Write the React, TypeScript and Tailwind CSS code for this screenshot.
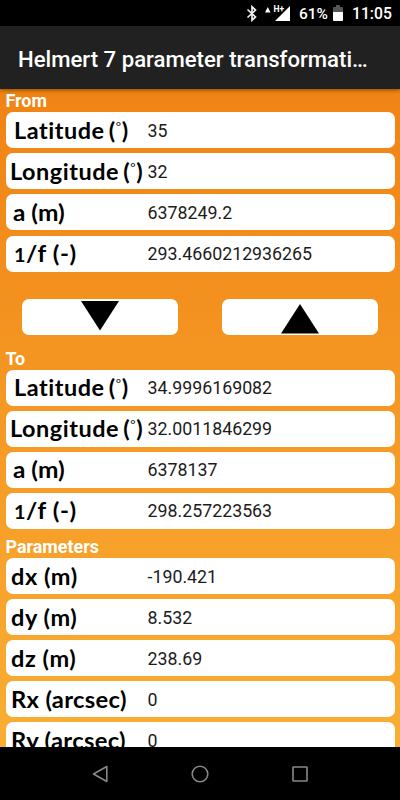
import type { ReactNode } from 'react';

type Field = {
    label: ReactNode;
    value: string;
    labelClass: string;
};

const latitude = (
    <>
        <span>Latitude</span>
        <span className="ml-[4px]">(</span>
        <sup className="-top-[8px] text-[12px] font-normal">°</sup>
        <span>)</span>
    </>
);

const longitude = (
    <>
        <span>Longitude</span>
        <span className="ml-[4px]">(</span>
        <sup className="-top-[8px] text-[12px] font-normal">°</sup>
        <span>)</span>
    </>
);

const flattening = (
    <>
        <span className="text-[18px]">1</span>/f (-)
    </>
);

const fromFields: Field[] = [
    { label: latitude, value: '35', labelClass: 'ml-[8.5px] scale-x-[1.065] tracking-[0.5px]' },
    { label: longitude, value: '32', labelClass: 'ml-[4px] scale-x-[1.065] tracking-[0.5px]' },
    { label: 'a (m)', value: '6378249.2', labelClass: 'ml-[7px] scale-x-[1.11]' },
    { label: flattening, value: '293.4660212936265', labelClass: 'ml-[8px] scale-x-[1.1] tracking-[0.5px]' },
];

const toFields: Field[] = [
    { label: latitude, value: '34.9996169082', labelClass: 'ml-[8.5px] scale-x-[1.065] tracking-[0.5px]' },
    { label: longitude, value: '32.0011846299', labelClass: 'ml-[4px] scale-x-[1.065] tracking-[0.5px]' },
    { label: 'a (m)', value: '6378137', labelClass: 'ml-[7px] scale-x-[1.11]' },
    { label: flattening, value: '298.257223563', labelClass: 'ml-[8px] scale-x-[1.1] tracking-[0.5px]' },
];

const paramFields: Field[] = [
    { label: 'dx (m)', value: '-190.421', labelClass: 'ml-[5px] scale-x-[1.07] tracking-[0.5px]' },
    { label: 'dy (m)', value: '8.532', labelClass: 'ml-[5px] scale-x-[1.07] tracking-[0.5px]' },
    { label: 'dz (m)', value: '238.69', labelClass: 'ml-[5px] scale-x-[1.07] tracking-[0.5px]' },
    { label: 'Rx (arcsec)', value: '0', labelClass: 'ml-[5px] scale-x-[1.08] tracking-[0.3px]' },
    { label: 'Ry (arcsec)', value: '0', labelClass: 'ml-[5px] scale-x-[1.08] tracking-[0.3px]' },
];

const FieldRow = ({ label, value, labelClass }: Field) => (
    <div className="flex h-9 shrink-0 items-center rounded-[7px] bg-white pt-px text-black">
        <div className="w-[142px] shrink-0">
            <span className={`block w-fit origin-left whitespace-nowrap font-['Lato',sans-serif] text-[22px] leading-9 font-bold ${labelClass}`}>
                {label}
            </span>
        </div>
        <span className="text-[17.8px] leading-9 text-[#1c1c1c]">{value}</span>
    </div>
);

const FieldGroup = ({ title, fields }: { title: string; fields: Field[] }) => (
    <section>
        <h2 className="h-[22px] text-[17.9px] leading-[22px] font-bold text-white">{title}</h2>
        <div className="flex flex-col gap-[5.1px]">
            {fields.map((field, idx) => (
                <FieldRow key={idx} {...field} />
            ))}
        </div>
    </section>
);

const StatusBar = () => (
    <div className="flex h-[26px] shrink-0 items-center bg-black pr-[9px] pt-[1px] text-white">
        <svg className="ml-auto h-[17px] w-[12px]" viewBox="0 0 12 17" fill="none" stroke="#f0f0f0" strokeWidth="1.7">
            <path d="M1.5 4.5 9.5 12 6 15.2V1.8L9.5 5 1.5 12.5" />
        </svg>
        <svg className="ml-[7px] h-[17px] w-[26px]" viewBox="0 0 26 17" fill="white">
            <path d="M0 7.5 2.800 2l2.700 5.500z" />
            <path d="M25 1v15H10z" />
            <text x="8.500" y="7.200" fontSize="8.500" fontWeight="700" fontFamily="Roboto, sans-serif" stroke="black" strokeWidth="1.600" paintOrder="stroke">
                H+
            </text>
        </svg>
        <span className="ml-[8px] w-[29px] pt-px text-[15.5px] leading-5 font-medium">61%</span>
        <svg className="ml-[5px] h-[17px] w-[10px]" viewBox="0 0 10 17">
            <path fill="#555" d="M3 0h4v2h2.200q.8 0 .8.8V7H0V2.800Q0 2 .8 2H3z" />
            <path fill="white" d="M0 7h10v8.200q0 .8-.8.8H.8q-.8 0-.8-.8z" />
        </svg>
        <span className="ml-[9px] w-[39px] pt-px text-[15.7px] leading-5 font-medium">11:05</span>
    </div>
);

const NavBar = () => (
    <div className="flex h-[53px] shrink-0 items-center justify-center gap-[82px] bg-black">
        <svg className="size-[18px]" viewBox="0 0 18 18" fill="none" stroke="#888" strokeWidth="1.6" strokeLinejoin="round">
            <path d="M15.8 1.5v15L2.5 9z" />
        </svg>
        <svg className="size-[18px]" viewBox="0 0 18 18" fill="none" stroke="#888" strokeWidth="1.6">
            <circle cx="9" cy="9" r="7.8" />
        </svg>
        <svg className="size-[18px]" viewBox="0 0 18 18" fill="none" stroke="#888" strokeWidth="1.6">
            <rect x="2" y="2" width="14" height="14" rx=".5" />
        </svg>
    </div>
);

const App = () => {
    return (
        <div className="flex h-[800px] w-[400px] flex-col overflow-hidden bg-black font-['Roboto',sans-serif]">
            <StatusBar />
            <header className="z-10 flex h-[63px] shrink-0 items-center bg-[#212121] px-[18px] pt-[4px] shadow-[0_1px_4px_rgba(0,0,0,0.45)]">
                <h1 className="whitespace-nowrap text-[22.15px] font-medium text-white">Helmert 7 parameter transformati…</h1>
            </header>

            <main className="min-h-0 flex-1 overflow-hidden bg-linear-to-b from-[#f08313] to-[#f9ae33] px-[5.5px] pt-[1.3px]">
                <FieldGroup title="From" fields={fromFields} />

                {/* Direction buttons */}
                <div className="mt-[27.5px] mb-[12.6px] flex justify-between pr-[17px] pl-4">
                    <button aria-label="Transform down" className="flex h-9 w-[156px] justify-center rounded-[7px] bg-white">
                        <svg className="h-9 w-[38px]" viewBox="0 0 38 36">
                            <path d="M0 2h38L19 31.5z" />
                        </svg>
                    </button>
                    <button aria-label="Transform up" className="flex h-9 w-[156px] justify-center rounded-[7px] bg-white">
                        <svg className="h-9 w-[38px]" viewBox="0 0 38 36">
                            <path d="M19 5 38 34.5H0z" />
                        </svg>
                    </button>
                </div>

                <FieldGroup title="To" fields={toFields} />
                <div className="h-[7.1px]" />
                <FieldGroup title="Parameters" fields={paramFields} />
            </main>

            <NavBar />
        </div>
    );
};

export default App;
